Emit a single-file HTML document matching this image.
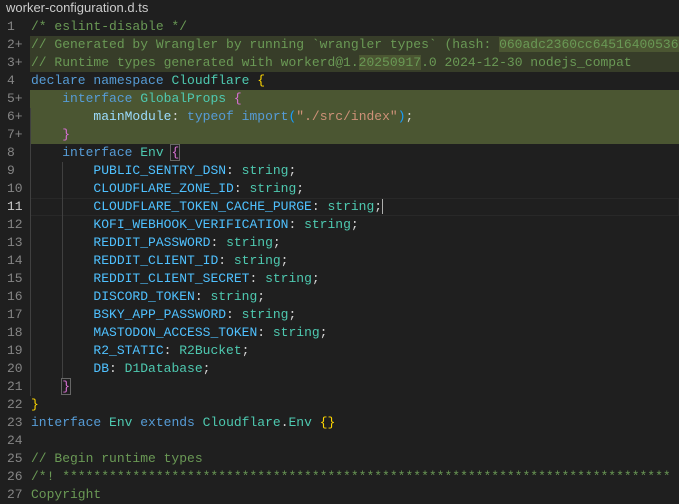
<!DOCTYPE html>
<html><head><style>
body{margin:0;width:679px;height:490px;overflow:hidden;background:#1f1f1f;font-family:"Liberation Mono",monospace;}
.title{position:absolute;left:6px;top:0;height:18px;font:13px "Liberation Sans",sans-serif;color:#cccccc;line-height:16px;}
.ed{position:absolute;left:0;top:18px;width:679px;}
.l{position:relative;height:18px;line-height:18px;font-size:13px;white-space:pre;color:#d4d4d4;}
.n{position:absolute;left:7px;top:0;color:#858585;font-size:13px;}
.n.cur{color:#cccccc;}
.c{position:absolute;left:31px;top:0;}
.hA{position:absolute;left:30px;right:0;top:0;height:18px;background:#373d29;}
.hB{position:absolute;left:30px;right:0;top:0;height:18px;background:#4b5632;}
.curl{position:absolute;left:30px;right:0;top:0;height:16px;border:1px solid #282828;}
.g{color:#6a9955}.k{color:#569cd6}.t{color:#4ec9b0}.p{color:#9cdcfe}.K{color:#4fc1ff}.s{color:#ce9178}
.y{color:#ffd700}.m{color:#da70d6}.b{color:#179fff}
.hl{background:#4b5632}
.guide{position:absolute;width:1px;background:#404040;}
</style></head><body>
<div class="title">worker-configuration.d.ts</div>
<div class="ed">
<div class="l"><span class="n">1</span><span class="c g">/* eslint-disable */</span></div>
<div class="l"><div class="hA"></div><span class="n">2+</span><span class="c g">// Generated by Wrangler by running `wrangler types` (hash: <span class="hl">060adc2360cc64516400536</span></span></div>
<div class="l"><div class="hA"></div><span class="n">3+</span><span class="c g">// Runtime types generated with workerd@1.<span class="hl">20250917</span>.0 2024-12-30 nodejs_compat</span></div>
<div class="l"><span class="n">4</span><span class="c"><span class="k">declare namespace</span> <span class="t">Cloudflare</span> <span class="y">{</span></span></div>
<div class="l"><div class="hB"></div><span class="n">5+</span><span class="c">    <span class="k">interface</span> <span class="t">GlobalProps</span> <span class="m">{</span></span></div>
<div class="l"><div class="hB"></div><span class="n">6+</span><span class="c">        <span class="p">mainModule</span>: <span class="k">typeof</span> <span class="k">import</span><span class="b">(</span><span class="s">"./src/index"</span><span class="b">)</span>;</span></div>
<div class="l"><div class="hB"></div><span class="n">7+</span><span class="c">    <span class="m">}</span></span></div>
<div class="l"><span class="n">8</span><span class="c">    <span class="k">interface</span> <span class="t">Env</span> <span class="m" style="outline:1px solid #666">{</span></span></div>
<div class="l"><span class="n">9</span><span class="c">        <span class="K">PUBLIC_SENTRY_DSN</span>: <span class="t">string</span>;</span></div>
<div class="l"><span class="n">10</span><span class="c">        <span class="K">CLOUDFLARE_ZONE_ID</span>: <span class="t">string</span>;</span></div>
<div class="l"><div class="curl"></div><span class="n cur">11</span><span class="c">        <span class="K">CLOUDFLARE_TOKEN_CACHE_PURGE</span>: <span class="t">string</span>;<span style="border-left:1px solid #aeafad"></span></span></div>
<div class="l"><span class="n">12</span><span class="c">        <span class="K">KOFI_WEBHOOK_VERIFICATION</span>: <span class="t">string</span>;</span></div>
<div class="l"><span class="n">13</span><span class="c">        <span class="K">REDDIT_PASSWORD</span>: <span class="t">string</span>;</span></div>
<div class="l"><span class="n">14</span><span class="c">        <span class="K">REDDIT_CLIENT_ID</span>: <span class="t">string</span>;</span></div>
<div class="l"><span class="n">15</span><span class="c">        <span class="K">REDDIT_CLIENT_SECRET</span>: <span class="t">string</span>;</span></div>
<div class="l"><span class="n">16</span><span class="c">        <span class="K">DISCORD_TOKEN</span>: <span class="t">string</span>;</span></div>
<div class="l"><span class="n">17</span><span class="c">        <span class="K">BSKY_APP_PASSWORD</span>: <span class="t">string</span>;</span></div>
<div class="l"><span class="n">18</span><span class="c">        <span class="K">MASTODON_ACCESS_TOKEN</span>: <span class="t">string</span>;</span></div>
<div class="l"><span class="n">19</span><span class="c">        <span class="K">R2_STATIC</span>: <span class="t">R2Bucket</span>;</span></div>
<div class="l"><span class="n">20</span><span class="c">        <span class="K">DB</span>: <span class="t">D1Database</span>;</span></div>
<div class="l"><span class="n">21</span><span class="c">    <span class="m" style="outline:1px solid #666">}</span></span></div>
<div class="l"><span class="n">22</span><span class="c"><span class="y">}</span></span></div>
<div class="l"><span class="n">23</span><span class="c"><span class="k">interface</span> <span class="t">Env</span> <span class="k">extends</span> <span class="t">Cloudflare</span>.<span class="t">Env</span> <span class="y">{}</span></span></div>
<div class="l"><span class="n">24</span></div>
<div class="l"><span class="n">25</span><span class="c g">// Begin runtime types</span></div>
<div class="l"><span class="n">26</span><span class="c g">/*! ******************************************************************************</span></div>
<div class="l"><span class="n">27</span><span class="c g">Copyright</span></div>
</div>
<div class="guide" style="left:30px;top:108px;height:288px"></div>
<div class="guide" style="left:62px;top:162px;height:216px"></div>
</body></html>
